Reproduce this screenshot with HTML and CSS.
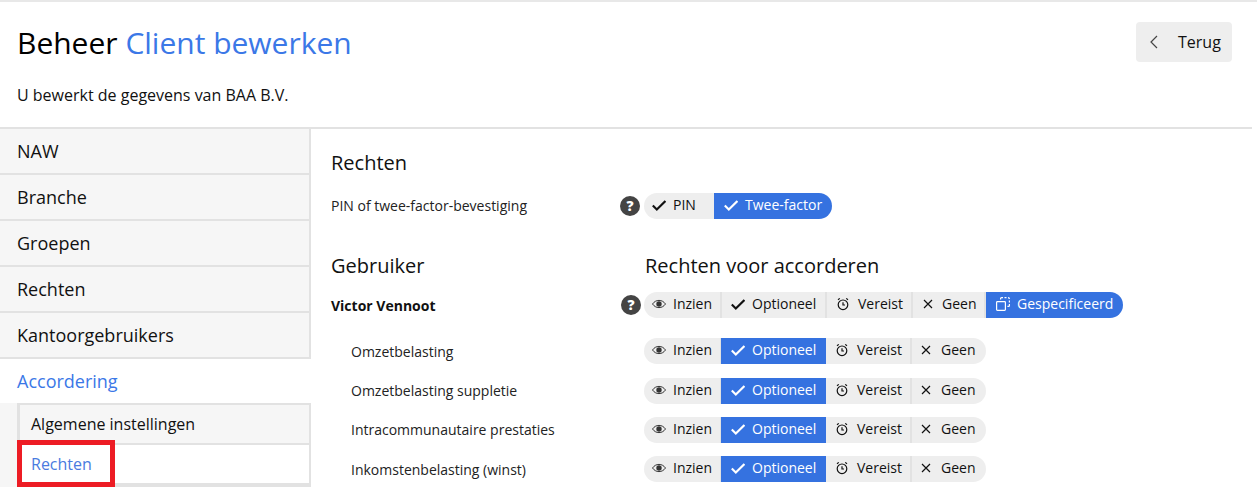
FILE: index.html
```html
<!DOCTYPE html>
<html lang="nl">
<head>
<meta charset="utf-8">
<title>Client bewerken</title>
<link rel="stylesheet" href="styles.css">
</head>
<body>
<svg class="defs" width="0" height="0" aria-hidden="true">
  <symbol id="i-check" viewBox="0 0 14 14"><path d="M.8 7.500l4 4L13.400 3" fill="none" stroke="currentColor" stroke-width="2.100"/></symbol>
  <symbol id="i-eye" viewBox="0 0 14 14"><path d="M.5 7C2.200 4.600 4.400 3.400 7 3.400S11.800 4.600 13.500 7C11.800 9.400 9.600 10.600 7 10.600S2.200 9.400.5 7z" fill="none" stroke="currentColor" stroke-width="1"/><circle cx="7" cy="7" r="2.700" fill="currentColor"/></symbol>
  <symbol id="i-clock" viewBox="0 0 14 14"><circle cx="7" cy="7.800" r="4.800" fill="none" stroke="currentColor" stroke-width="1.200"/><path d="M7 5.200v2.800h2M2 2.800L3.800 1.400M12 2.800L10.200 1.400" fill="none" stroke="currentColor" stroke-width="1.200"/></symbol>
  <symbol id="i-x" viewBox="0 0 14 14"><path d="M3 3l8 8M11 3l-8 8" fill="none" stroke="currentColor" stroke-width="1.200"/></symbol>
  <symbol id="i-copy" viewBox="0 0 14 14"><rect x=".6" y="4.600" width="8.800" height="8.800" rx=".8" fill="none" stroke="currentColor" stroke-width="1.200"/><path d="M4.600 2.600V1.600a1 1 0 0 1 1-1h1.400M8.500.6h2M12 .6a1.400 1.400 0 0 1 1.400 1.400M13.400 3.500v2M13.400 7v1.400a1 1 0 0 1-1 1h-1" fill="none" stroke="currentColor" stroke-width="1.200"/></symbol>
</svg>
<div class="page">
  <header class="head">
    <div class="head-top">
      <h1 class="title">Beheer <span class="accent">Client bewerken</span></h1>
      <a class="back" href="#"><svg class="back-icon" viewBox="0 0 8 14" width="8" height="14"><path d="M7 1L1 7l6 6" fill="none" stroke="currentColor" stroke-width="1.200"/></svg>Terug</a>
    </div>
    <p class="intro">U bewerkt de gegevens van BAA B.V.</p>
  </header>
  <div class="body">
    <nav class="side">
      <a class="side-item" href="#">NAW</a>
      <a class="side-item" href="#">Branche</a>
      <a class="side-item" href="#">Groepen</a>
      <a class="side-item" href="#">Rechten</a>
      <a class="side-item" href="#">Kantoorgebruikers</a>
      <a class="side-item side-active" href="#">Accordering</a>
      <div class="sub">
        <a class="sub-item" href="#">Algemene instellingen</a>
        <a class="sub-item sub-active" href="#">Rechten</a>
        <div class="sub-item sub-next"></div>
        <span class="marker"></span>
      </div>
    </nav>
    <main class="main">
      <h2 class="h-rechten">Rechten</h2>
      <div class="row row-pin">
        <span class="label">PIN of twee-factor-bevestiging</span>
        <span class="help">?</span>
        <div class="seg">
          <span class="opt o-pin"><svg class="ic"><use href="#i-check"/></svg>PIN</span>
          <span class="opt o-twee on"><svg class="ic"><use href="#i-check"/></svg>Twee-factor</span>
        </div>
      </div>
      <div class="heads">
        <h2 class="h-user">Gebruiker</h2>
        <h2 class="h-acc">Rechten voor accorderen</h2>
      </div>
      <div class="row row-user">
        <span class="label strong">Victor Vennoot</span>
        <span class="help">?</span>
        <div class="seg">
          <span class="opt o-in"><svg class="ic"><use href="#i-eye"/></svg>Inzien</span>
          <span class="opt o-op"><svg class="ic"><use href="#i-check"/></svg>Optioneel</span>
          <span class="opt o-ve"><svg class="ic"><use href="#i-clock"/></svg>Vereist</span>
          <span class="opt o-ge"><svg class="ic"><use href="#i-x"/></svg>Geen</span>
          <span class="opt o-sp on"><svg class="ic"><use href="#i-copy"/></svg>Gespecificeerd</span>
        </div>
      </div>
      <div class="row row-sub r1">
        <span class="label sub-label">Omzetbelasting</span>
        <div class="seg">
          <span class="opt o-in"><svg class="ic"><use href="#i-eye"/></svg>Inzien</span>
          <span class="opt o-op on"><svg class="ic"><use href="#i-check"/></svg>Optioneel</span>
          <span class="opt o-ve"><svg class="ic"><use href="#i-clock"/></svg>Vereist</span>
          <span class="opt o-ge"><svg class="ic"><use href="#i-x"/></svg>Geen</span>
        </div>
      </div>
      <div class="row row-sub r2">
        <span class="label sub-label">Omzetbelasting suppletie</span>
        <div class="seg">
          <span class="opt o-in"><svg class="ic"><use href="#i-eye"/></svg>Inzien</span>
          <span class="opt o-op on"><svg class="ic"><use href="#i-check"/></svg>Optioneel</span>
          <span class="opt o-ve"><svg class="ic"><use href="#i-clock"/></svg>Vereist</span>
          <span class="opt o-ge"><svg class="ic"><use href="#i-x"/></svg>Geen</span>
        </div>
      </div>
      <div class="row row-sub r3">
        <span class="label sub-label">Intracommunautaire prestaties</span>
        <div class="seg">
          <span class="opt o-in"><svg class="ic"><use href="#i-eye"/></svg>Inzien</span>
          <span class="opt o-op on"><svg class="ic"><use href="#i-check"/></svg>Optioneel</span>
          <span class="opt o-ve"><svg class="ic"><use href="#i-clock"/></svg>Vereist</span>
          <span class="opt o-ge"><svg class="ic"><use href="#i-x"/></svg>Geen</span>
        </div>
      </div>
      <div class="row row-sub r4">
        <span class="label sub-label">Inkomstenbelasting (winst)</span>
        <div class="seg">
          <span class="opt o-in"><svg class="ic"><use href="#i-eye"/></svg>Inzien</span>
          <span class="opt o-op on"><svg class="ic"><use href="#i-check"/></svg>Optioneel</span>
          <span class="opt o-ve"><svg class="ic"><use href="#i-clock"/></svg>Vereist</span>
          <span class="opt o-ge"><svg class="ic"><use href="#i-x"/></svg>Geen</span>
        </div>
      </div>
    </main>
  </div>
</div>
</body>
</html>
```
FILE: styles.css
```css
* { box-sizing: border-box; }
html, body { margin: 0; height: 487px; overflow: hidden; background: #fff; }
body { font-family: "Open Sans", sans-serif; color: #111; border-top: 2px solid #e8e8e8; }
a { color: inherit; text-decoration: none; }
.defs { position: absolute; }
.page { width: 1252px; height: 485px; overflow: hidden; }

.head { height: 127px; border-bottom: 2px solid #e2e2e2; padding: 20px 20px 0 18px; }
.head-top { display: flex; justify-content: space-between; align-items: flex-start; }
.title { margin: 0 0 0 -1px; font-size: 30px; line-height: 41px; font-weight: 400; color: #000; }
.accent { color: #3b78e7; }
.back { display: flex; align-items: center; width: 96px; height: 40px; background: #eee; border-radius: 4px; font-size: 16px; padding-left: 14px; color: #111; }
.back-icon { color: #444; margin-right: 20px; }
.intro { margin: 21px 0 0 -1px; font-size: 16px; line-height: 22px; color: #111; }

.body { display: flex; }
.side { width: 311px; flex: none; }
.side-item { display: block; height: 46px; padding: 0 0 0 17px; font-size: 18px; line-height: 44px; background: #f6f6f6; border-right: 2px solid #e2e2e2; border-bottom: 2px solid #e2e2e2; color: #111; }
.side-active { height: 44px; background: #fff; border: 0; color: #3b78e7; line-height: 45px; }
.sub { position: relative; padding-left: 17px; background: #f6f6f6; }
.sub-item { display: block; height: 42px; padding-left: 11px; font-size: 16px; line-height: 38px; background: #f6f6f6; border-left: 3px solid #e2e2e2; border-right: 2px solid #e2e2e2; border-top: 2px solid #e2e2e2; border-bottom: 2px solid #e2e2e2; color: #111; }
.sub-active { height: 40px; background: #fff; color: #4a7be0; border-top: 0; border-left: 0; padding-left: 14px; line-height: 38px; }
.sub-next { border-bottom: 0; }
.marker { position: absolute; left: 17px; top: 37px; width: 98px; height: 47px; border: 5px solid #ed1c24; }

.main { flex: 1; padding: 20px 0 0 20px; }
.h-rechten, .h-user, .h-acc { margin: 0; font-size: 20px; line-height: 27px; font-weight: 400; color: #111; }
.row { display: flex; align-items: center; height: 26px; }
.row-pin { margin-top: 17px; }
.label { font-size: 14px; color: #222; }
.row-pin .label { width: 289px; padding-bottom: 2px; }
.row-user .label { width: 290px; }
.strong { font-weight: 700; color: #111; }
.sub-label { width: 313px; padding-left: 20px; }
.r2 .sub-label, .r3 .sub-label { padding-bottom: 2px; }
.help { width: 20px; height: 20px; flex: none; border-radius: 50%; background: #444; color: #fff; font-size: 14px; font-weight: 800; line-height: 20px; text-align: center; margin-right: 4px; }
.row-user .help { margin-right: 3px; }
.heads { display: flex; margin-top: 33px; }
.h-user { width: 314px; }
.row-user { margin-top: 13px; }
.r1 { margin-top: 20px; }
.r2 { margin-top: 14px; }
.r3, .r4 { margin-top: 13px; }

.seg { display: flex; height: 26px; font-size: 14px; color: #111; }
.opt { display: flex; align-items: center; height: 26px; padding-bottom: 4px; background: #eee; white-space: nowrap; border-right: 2px solid #e2e2e2; }
.opt .ic { position: relative; top: 1px; }
.opt:first-child { border-radius: 13px 0 0 13px; }
.opt:last-child { border-radius: 0 13px 13px 0; border-right: 0; }
.on { background: #3572e0; color: #fff; border-right: 0; }
.ic { width: 14px; height: 14px; margin-right: 7px; flex: none; }
.o-pin { width: 70px; padding-left: 8px; border-right: 0; }
.o-twee { width: 118px; padding-left: 10px; }
.o-in { width: 78px; padding-left: 8px; }
.o-in .ic { color: #333; }
.o-op { width: 105px; padding-left: 9px; }
.o-op.on { margin-left: -1px; padding-left: 10px; }
.o-ve { width: 86px; padding-left: 9px; }
.o-ve .ic { margin-right: 8px; }
.o-ge { width: 73px; padding-left: 8px; }
.row-sub .o-ge { width: 74px; padding-left: 7px; }
.row-sub .o-ge .ic { margin-right: 8px; }
.o-sp { width: 137px; padding-left: 10px; }
```
